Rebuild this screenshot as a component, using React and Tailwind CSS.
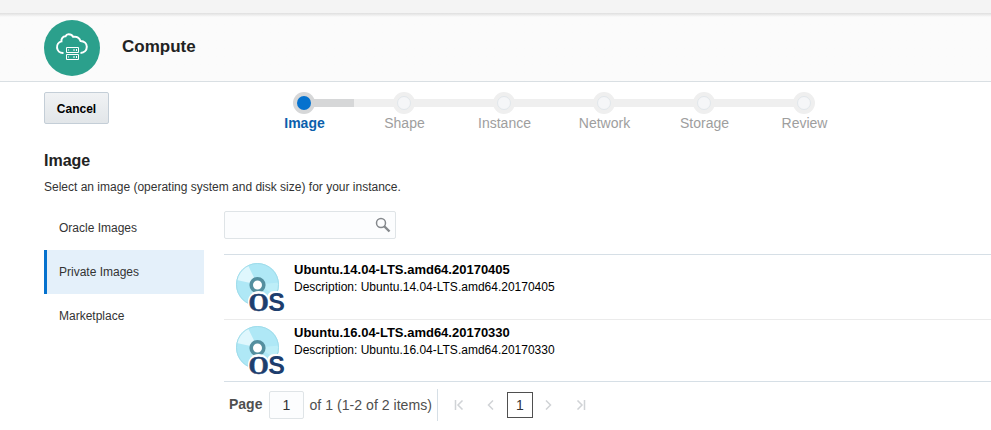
const STEPS = ['Image', 'Shape', 'Instance', 'Network', 'Storage', 'Review'];
const SOURCES = ['Oracle Images', 'Private Images', 'Marketplace'];
const IMAGES = ['Ubuntu.14.04-LTS.amd64.20170405', 'Ubuntu.16.04-LTS.amd64.20170330'];

function ComputeLogo() {
  return (
    <svg width="56" height="56" viewBox="0 0 56 56" className="block">
      <circle cx="28" cy="28" r="28" fill="#2ba08c" />
      <path
        d="M19.500 33h-.7a5.900 5.900 0 0 1-1.400-11.600c-.3-3 1.500-4.900 4.100-5.100C22.100 14.800 23.200 14.200 24.600 14.200c2 0 3.700 1 4.600 2.700 3.200-.8 6.200.8 7.300 4 3.800.2 6.300 2.700 6.300 5.900 0 3.500-2.500 6-6.300 6.200"
        fill="none"
        stroke="#fff"
        strokeWidth="2"
      />
      <path d="M22.500 27.500h12v5h-12zM22.500 34.500h12v5h-12z" fill="none" stroke="#fff" strokeWidth="1" />
      <path d="M24 29.500h1v1h-1zM29.500 29h1v2h-1zM32 29h1v2h-1zM24 36.500h1v1h-1zM29.500 36h1v2h-1zM32 36h1v2h-1z" fill="#fff" />
    </svg>
  );
}

function DiscIcon() {
  return (
    <svg width="52" height="52" viewBox="0 0 52 52" className="block shrink-0 overflow-visible">
      <circle cx="21.500" cy="21.500" r="21.500" fill="#afe8f6" />
      <path d="M21.500 21.500L.8 17A21.500 21.500 0 0 1 12 2.300z" fill="#dff7fd" />
      <path d="M21.500 21.500L43 19.500a21.500 21.500 0 0 1-3 13z" fill="#bdeef8" />
      <circle cx="21.500" cy="21.500" r="21" fill="none" stroke="#9fdcea" strokeWidth="1" />
      <circle cx="21.500" cy="22" r="6.300" fill="#fff" stroke="#548f9f" strokeWidth="3.600" />
      <ellipse cx="22.700" cy="39" rx="10.800" ry="11" fill="#fff" />
      <rect x="31" y="28" width="20" height="22" rx="7" fill="#fff" />
      <text y="47.700" fontWeight="700" fill="#1d3e6e">
        <tspan
          x="12.600"
          fontSize="26"
          stroke="#1d3e6e"
          strokeWidth=".6"
          className="font-['Liberation_Serif',serif]"
        >
          O
        </tspan>
        <tspan x="32.300" fontSize="25" className="font-['Liberation_Sans',Arial,sans-serif]">
          S
        </tspan>
      </text>
    </svg>
  );
}

function Step({ label, index }) {
  const current = index === 0;
  const last = index === STEPS.length - 1;
  return (
    <li className="w-[100px]">
      <div className="flex h-[22px] items-center">
        <span className={`-mr-1 h-2 flex-1 ${current ? '' : 'bg-[#efefef]'}`} />
        <span
          className={`z-10 flex size-[22px] items-center justify-center rounded-full ${
            current ? 'bg-[#d6d7d8]' : 'bg-[#efefef]'
          }`}
        >
          <span
            className={`size-[14px] rounded-full ${
              current ? 'bg-[#0572ce]' : 'border border-[#e1e7eb] bg-[#f5f6f8]'
            }`}
          />
        </span>
        <span className={`-ml-1 h-2 flex-1 ${last ? '' : current ? 'bg-[#d6d7d8]' : 'bg-[#efefef]'}`} />
      </div>
      <div
        className={`pt-px pl-px text-center text-sm leading-4 ${
          current ? 'font-bold text-[#0b5fac]' : 'text-[#9e9e9e]'
        }`}
      >
        {label}
      </div>
    </li>
  );
}

function Chevron({ d, className }) {
  return (
    <svg width="10" height="10" viewBox="0 0 10 10" className={className}>
      <path d={d} fill="none" stroke="#d0d3d6" strokeWidth="1.500" />
    </svg>
  );
}

export default function App() {
  return (
    <div className="h-[430px] overflow-hidden bg-white font-['Liberation_Sans',Arial,sans-serif] text-xs text-[#333]">
      <div className="h-[13px] bg-[#f4f4f4]" />
      <header className="flex h-[69px] items-center border-b border-[#d9dfe3] bg-[#fbfbfb] bg-linear-to-b from-[#dfdfdf] from-0% to-[#fbfbfb] to-[4px] pl-11">
        <div className="pt-px">
          <ComputeLogo />
        </div>
        <h1 className="ml-[22px] text-[17px] font-bold text-[#222]">Compute</h1>
      </header>

      <div className="flex h-[66px] pt-[10px] pl-11">
        <button className="h-8 w-[65px] rounded-[2px] border border-[#c4ced7] bg-linear-to-b from-[#f0f2f4] to-[#e2e6e9] pt-px text-xs font-bold text-black">
          Cancel
        </button>
        <ol className="ml-[145px] flex">
          {STEPS.map((label, i) => (
            <Step key={label} label={label} index={i} />
          ))}
        </ol>
      </div>

      <section className="pl-11">
        <h2 className="pt-[3px] text-base leading-5 font-bold text-[#222]">Image</h2>
        <p className="mt-2 leading-4">Select an image (operating system and disk size) for your instance.</p>

        <div className="mt-[11px] flex">
          <nav className="w-40 shrink-0">
            {SOURCES.map((name, i) => (
              <div
                key={name}
                className={`flex h-11 items-center border-l-[3px] pl-3 ${
                  i === 1 ? 'border-[#0572ce] bg-[#e4f0fa]' : 'border-transparent'
                }`}
              >
                {name}
              </div>
            ))}
          </nav>

          <div className="ml-5 flex-1 pt-[5px]">
            <div className="flex h-7 w-[172px] justify-end rounded-[2px] border border-[#dfe4e7] bg-[#fcfdfe] pt-[5px] pr-1">
              <svg width="16" height="16" viewBox="0 0 16 16">
                <circle cx="6" cy="6" r="4.500" fill="none" stroke="#85898d" strokeWidth="1.500" />
                <path d="M9 9l5.500 5.500" stroke="#85898d" strokeWidth="2.400" />
              </svg>
            </div>

            <ul className="mt-[15px] border-y border-[#d6dfe6] text-black">
              {IMAGES.map((name, i) => (
                <li key={name} className={`flex pl-3 ${i === 0 ? 'h-[65px] border-b border-[#ebebeb] pt-2' : 'h-[61px] pt-[6px]'}`}>
                  <DiscIcon />
                  <div className="ml-[6px]">
                    <div className="text-[13px] leading-[14px] font-bold">{name}</div>
                    <div className="mt-[2px] leading-4">Description: {name}</div>
                  </div>
                </li>
              ))}
            </ul>

            <div className="flex h-[46px] items-center pl-[5px] text-sm text-[#4f4f4f]">
              <span className="w-10 pb-[2px] font-bold">Page</span>
              <span className="flex h-7 w-[35px] items-center justify-center rounded-[2px] border border-[#dfe4e7] bg-[#fcfdfe] text-[#333]">
                1
              </span>
              <span className="ml-[5.500px] w-[127.500px] text-[14.080px] tracking-[0.020px] whitespace-nowrap">of 1 (1-2 of 2 items)</span>
              <span className="h-8 w-px bg-[#d6dfe6]" />
              <Chevron d="M1.500 0v10M8.500 .5L4 5l4.500 4.500" className="ml-4" />
              <Chevron d="M7 .5L2.500 5l4.500 4.500" className="ml-[22px]" />
              <span className="ml-[11px] flex size-[26px] items-center justify-center border border-[#4f4f4f] text-[#333]">1</span>
              <Chevron d="M2 .5L6.500 5L2 9.500" className="ml-[11px]" />
              <Chevron d="M8.500 0v10M1.500 .5L6 5l-4.500 4.500" className="ml-[22px]" />
            </div>
          </div>
        </div>
      </section>
    </div>
  );
}
